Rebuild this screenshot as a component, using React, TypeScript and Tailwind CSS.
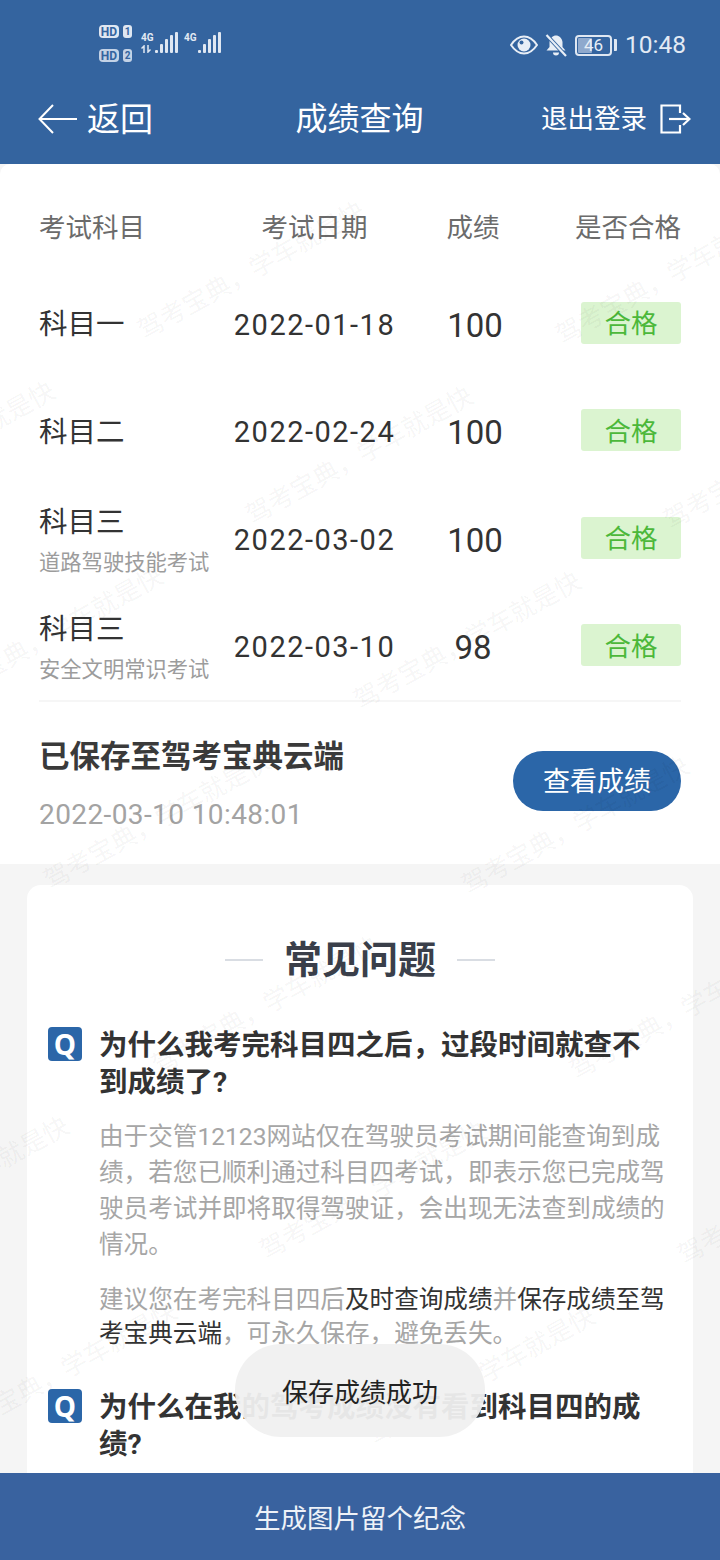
import React from "react";

const sans = "font-['Roboto','Noto_Sans_CJK_SC',sans-serif]";

const rows = [
  { name: "科目一", sub: "", date: "2022-01-18", score: "100", shift: "pl-[4px]" },
  { name: "科目二", sub: "", date: "2022-02-24", score: "100", shift: "pl-[4px]" },
  { name: "科目三", sub: "道路驾驶技能考试", date: "2022-03-02", score: "100", shift: "pl-[4px]" },
  { name: "科目三", sub: "安全文明常识考试", date: "2022-03-10", score: "98", shift: "" },
];

// 水印网格
const marks: { x: number; y: number }[] = [];
for (let j = -3; j < 3; j++) {
  for (let i = -2; i < 8; i++) {
    const x = 140 + i * 108 + j * 418;
    const y = 156 + i * 185 + j * 5;
    if (x > -260 && x < 720 && y > -20 && y < 1340) marks.push({ x, y });
  }
}

const Signal = ({ bars }: { bars: number[] }) => (
  <div className="flex items-end gap-[2px]">
    {bars.map((h, i) => (
      <div key={i} className="w-[3px] rounded-[1px] bg-[#dfe7f2]" style={{ height: h }} />
    ))}
  </div>
);

const StatusBar = () => (
  <div className="flex h-[88px] items-start justify-between pl-[99px] pr-[34px] pt-[25px] text-[#e3eaf4]">
    <div className="flex">
      <div className="flex flex-col gap-[11px]">
        <div className="flex items-center gap-[4px] font-['Roboto',sans-serif] text-[12px] font-bold leading-none">
          <span className="flex h-[13px] w-[20px] items-center justify-center rounded-[4px] bg-[#dfe7f2] text-[#34649f]">HD</span>
          <span className="flex h-[13px] w-[9px] items-center justify-center rounded-[3px] bg-[#dfe7f2] text-[10px] text-[#34649f]">1</span>
        </div>
        <div className="flex items-center gap-[4px] font-['Roboto',sans-serif] text-[12px] font-bold leading-none">
          <span className="flex h-[13px] w-[20px] items-center justify-center rounded-[4px] bg-[#c3d2e6] text-[#34649f]">HD</span>
          <span className="flex h-[13px] w-[9px] items-center justify-center rounded-[3px] bg-[#c3d2e6] text-[10px] text-[#34649f]">2</span>
        </div>
      </div>
      <div className="ml-[9px] mt-[7px] flex items-start">
        <div className="flex w-[14px] flex-col font-['Roboto',sans-serif] text-[10px] font-bold leading-[11px]">
          <span>4G</span>
          <svg width="12" height="8" viewBox="0 0 12 8" fill="none" stroke="#dfe7f2" strokeWidth="1.500" className="mt-[2px]">
            <path d="M3 8V1L0.500 3.500" />
            <path d="M7 0v7l2.500-2.500" />
          </svg>
        </div>
        <Signal bars={[3, 9, 14, 18, 21]} />
        <span className="ml-[6px] font-['Roboto',sans-serif] text-[10px] font-bold leading-[11px]">4G</span>
        <div className="ml-[1px]">
          <Signal bars={[3, 9, 14, 18, 21]} />
        </div>
      </div>
    </div>
    <div className="flex items-center">
      <svg width="28" height="20" viewBox="0 0 28 20" className="mr-[7px]">
        <path d="M1 10C5 4 9 1.500 14 1.500S23 4 27 10c-4 6-8 8.500-13 8.500S5 16 1 10z" fill="none" stroke="#e8eef6" strokeWidth="2" />
        <circle cx="14" cy="10" r="6.500" fill="#e8eef6" />
        <circle cx="11.500" cy="7.500" r="2" fill="#34649f" />
      </svg>
      <svg width="22" height="23" viewBox="0 0 22 23" className="mr-[8px]">
        <path d="M4.500 8C5 4 8 1.500 11 1.500s6 2.500 6.500 6.500v5l3 3.500h-19l3-3.500z" fill="#e8eef6" />
        <path d="M8 18.500h6a3 3 0 0 1-6 0z" fill="#e8eef6" />
        <path d="M1.500 1 21 22" stroke="#34649f" strokeWidth="4" />
        <path d="M1.500 1 21 22" stroke="#e8eef6" strokeWidth="2.200" />
      </svg>
      <div className="relative flex h-[21px] w-[37px] items-center rounded-[4px] border-2 border-[#dfe7f2] p-[1px]">
        <div className="h-full w-[46%] rounded-[1px] bg-[#8fa9cd]" />
        <span className="absolute inset-0 flex items-center justify-center font-['Roboto',sans-serif] text-[17px] leading-none text-[#e8eef6]">46</span>
      </div>
      <div className="ml-[2px] mr-[8px] h-[12px] w-[3px] rounded-r-[1px] bg-[#dfe7f2]" />
      <span className="font-['Roboto',sans-serif] text-[24.500px] leading-[40px]">10:48</span>
    </div>
  </div>
);

const NavBar = () => (
  <div className="flex h-[76px] items-center justify-between pl-[38px] pr-[29px] pb-[14px] text-white">
    <div className="flex w-[190px] items-center">
      <svg width="39" height="30" viewBox="0 0 39 30" fill="none" stroke="white" strokeWidth="2">
        <path d="M39 15H2" />
        <path d="M15 1 1.500 15 15 29" />
      </svg>
      <span className="ml-[10px] text-[33px] leading-none">返回</span>
    </div>
    <span className="text-[32px] leading-none">成绩查询</span>
    <div className="flex w-[200px] items-center justify-end">
      <span className="text-[26.500px] leading-none">退出登录</span>
      <svg width="31" height="30" viewBox="0 0 31 30" fill="none" stroke="white" strokeWidth="2.200" className="ml-[13px]">
        <path d="M20 9V1.500H1.500v27H20V21" />
        <path d="M9 15h20" />
        <path d="M23 9l6.500 6-6.500 6" />
      </svg>
    </div>
  </div>
);

const ScoreTable = () => (
  <section className="h-[700px] rounded-t-[10px] bg-white px-[39px]">
    <div className="grid h-[107.500px] grid-cols-[175px_201px_116px_150px] items-center pt-[21px] text-[26.500px] text-[#6b6b6b]">
      <span>考试科目</span>
      <span className="text-center">考试日期</span>
      <span className="text-center">成绩</span>
      <span className="text-right">是否合格</span>
    </div>
    {rows.map((r) => (
      <div key={r.date} className="grid h-[107.500px] grid-cols-[175px_201px_116px_150px] items-center text-[#333]">
        <div className="flex flex-col whitespace-nowrap">
          <span className="text-[28.500px] leading-[38px]">{r.name}</span>
          {r.sub && <span className="mt-[7px] text-[21.300px] leading-[28px] text-[#9c9c9c]">{r.sub}</span>}
        </div>
        <span className="text-center text-[29px] tracking-[1.500px]">{r.date}</span>
        <span className={`text-center text-[33px] ${r.shift}`}>{r.score}</span>
        <div className="flex justify-end pb-[5px]">
          <span className="flex h-[42px] w-[100px] items-center justify-center rounded-[3px] bg-[#dbf4d0] pt-[3px] text-[26.500px] text-[#4cb83a]">合格</span>
        </div>
      </div>
    ))}
    <div className="-mt-[2px] flex h-[163px] items-center justify-between border-t-2 border-[#f6f6f6]">
      <div className="pt-[7px]">
        <div className="text-[30.500px] font-bold leading-[40px] text-[#3a3a3a]">已保存至驾考宝典云端</div>
        <div className="mt-[18px] text-[28px] leading-[40px] tracking-[0.400px] text-[#a3a3a3]">2022-03-10 10:48:01</div>
      </div>
      <button className="mb-[2px] flex h-[60px] w-[168px] items-center justify-center rounded-full bg-[#2b66a8] pt-[3px] text-[27px] text-white">查看成绩</button>
    </div>
  </section>
);

const Question = ({ children }: { children: React.ReactNode }) => (
  <div className="flex items-start">
    <div className="mt-[2px] flex h-[34px] w-[34px] shrink-0 items-center justify-center rounded-[4px] bg-[#2b66a8] font-['Open_Sans',sans-serif] text-[28px] font-bold leading-none text-white">Q</div>
    <h3 className="ml-[17px] pr-[3px] pt-[2px] text-[28.500px] font-bold leading-[37px] text-[#333]">{children}</h3>
  </div>
);

const FaqCard = () => (
  <div className="h-[640px] rounded-t-[14px] bg-white pl-[21px] pr-[24px] pt-[50px]">
    <div className="flex items-center justify-center pl-[3px]">
      <div className="h-[2px] w-[38px] bg-[#d9dde3]" />
      <h2 className="mx-[21px] text-[38px] font-bold leading-[50px] text-[#3a3f4a]">常见问题</h2>
      <div className="h-[2px] w-[38px] bg-[#d9dde3]" />
    </div>
    <div className="mt-[40px]">
      <Question>为什么我考完科目四之后，过段时间就查不到成绩了?</Question>
      <div className="ml-[51px] mt-[18px] text-[24.600px] leading-[36px] text-[#a6a6a6]">
        <p>由于交管12123网站仅在驾驶员考试期间能查询到成绩，若您已顺利通过科目四考试，即表示您已完成驾驶员考试并即将取得驾驶证，会出现无法查到成绩的情况。</p>
        <p className="mt-[20px] leading-[34px]">
          建议您在考完科目四后<span className="text-[#333]">及时查询成绩</span>并<span className="text-[#333]">保存成绩至驾考宝典云端</span>，可永久保存，避免丢失。
        </p>
      </div>
    </div>
    <div className="mt-[36px]">
      <Question>为什么在我的驾考成绩没有看到科目四的成绩?</Question>
    </div>
  </div>
);

const App: React.FC = () => {
  return (
    <div className={`relative flex h-[1560px] w-[720px] flex-col overflow-hidden bg-[#f5f5f5] ${sans}`}>
      <header className="h-[164px] shrink-0 bg-[#34649f]">
        <StatusBar />
        <NavBar />
      </header>

      <main className="relative min-h-0 flex-1 overflow-hidden">
        <ScoreTable />
        <div className="px-[27px] pt-[21px]">
          <FaqCard />
        </div>

        {/* 水印层 */}
        <div className="pointer-events-none absolute inset-0 overflow-hidden">
          {marks.map((m) => (
            <span
              key={`${m.x}-${m.y}`}
              className="absolute origin-left -rotate-[29deg] whitespace-nowrap text-[25.500px] leading-none text-black/[0.05]"
              style={{ left: m.x, top: m.y }}
            >
              驾考宝典，学车就是快
            </span>
          ))}
        </div>
      </main>

      <button className="h-[87px] shrink-0 bg-[#39629f] pt-[5px] text-[26.500px] text-[#eef2f8]">生成图片留个纪念</button>

      {/* 提示 */}
      <div className="absolute left-[235px] top-[1344px] flex h-[93px] w-[250px] items-center justify-center rounded-[46px] bg-[#f0f0f0]/95 pt-[5px] text-[26px] text-[#222]">
        保存成绩成功
      </div>
    </div>
  );
};

export default App;
